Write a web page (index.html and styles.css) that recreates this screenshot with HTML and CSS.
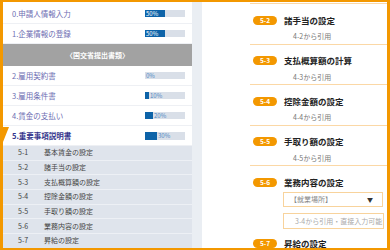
FILE: index.html
```html
<!DOCTYPE html>
<html lang="ja">
<head>
<meta charset="utf-8">
<link rel="stylesheet" href="styles.css">
</head>
<body>
<div class="frame">
  <aside class="nav">
    <div class="row"><span class="label">0.申請人情報入力</span><div class="bar"><div class="fill in" style="width:50%"><span class="pct">50%</span></div></div></div>
    <div class="row"><span class="label">1.企業情報の登録</span><div class="bar"><div class="fill in" style="width:50%"><span class="pct">50%</span></div></div></div>
    <div class="group">〈国交省提出書類〉</div>
    <div class="row"><span class="label">2.雇用契約書</span><div class="bar"><div class="fill" style="width:0%"></div><span class="pct">0%</span></div></div>
    <div class="row"><span class="label">3.雇用条件書</span><div class="bar"><div class="fill" style="width:10%"></div><span class="pct">10%</span></div></div>
    <div class="row"><span class="label">4.賃金の支払い</span><div class="bar"><div class="fill" style="width:20%"></div><span class="pct">20%</span></div></div>
    <div class="row active"><span class="label">5.重要事項説明書</span><div class="bar tall"><div class="fill" style="width:30%"></div><span class="pct">30%</span></div></div>
    <div class="sub"><span class="num">5-1</span><span>基本賃金の設定</span></div>
    <div class="sub"><span class="num">5-2</span><span>諸手当の設定</span></div>
    <div class="sub"><span class="num">5-3</span><span>支払概算額の設定</span></div>
    <div class="sub"><span class="num">5-4</span><span>控除金額の設定</span></div>
    <div class="sub"><span class="num">5-5</span><span>手取り額の設定</span></div>
    <div class="sub"><span class="num">5-6</span><span>業務内容の設定</span></div>
    <div class="sub"><span class="num">5-7</span><span>昇給の設定</span></div>
  </aside>
  <div class="gutter"></div>
  <main class="detail">
    <div class="topline"></div>
    <section class="item">
      <div class="head"><span class="badge">5-2</span><span class="title">諸手当の設定</span></div>
      <div class="note">4-2から引用</div>
    </section>
    <section class="item">
      <div class="head"><span class="badge">5-3</span><span class="title">支払概算額の計算</span></div>
      <div class="note">4-3から引用</div>
    </section>
    <section class="item">
      <div class="head"><span class="badge">5-4</span><span class="title">控除金額の設定</span></div>
      <div class="note">4-4から引用</div>
    </section>
    <section class="item">
      <div class="head"><span class="badge">5-5</span><span class="title">手取り額の設定</span></div>
      <div class="note">4-5から引用</div>
    </section>
    <section class="item open">
      <div class="head"><span class="badge">5-6</span><span class="title">業務内容の設定</span></div>
      <div class="select"><span>【就業場所】</span><span class="arrow">▼</span></div>
      <div class="input">3-4から引用・直接入力可能</div>
    </section>
    <section class="item last">
      <div class="head"><span class="badge">5-7</span><span class="title">昇給の設定</span></div>
    </section>
  </main>
</div>
</body>
</html>
```
FILE: styles.css
```css
html, body {
  margin: 0;
  padding: 0;
  background: #fff;
}

body {
  font-family: "Noto Sans CJK JP", "Noto Sans", sans-serif;
}

.frame {
  width: 390px;
  height: 250px;
  box-sizing: border-box;
  border: solid #f39800;
  border-width: 2px 3px;
  display: flex;
  overflow: hidden;
  background: #fff;
}

/* left navigation */
.nav {
  width: 189px;
  flex: none;
  padding-top: 2px;
  display: flex;
  flex-direction: column;
  background: #fff;
}

.row {
  height: 20px;
  flex: none;
  box-sizing: border-box;
  border-bottom: 1px solid #eef0f4;
  display: flex;
  align-items: center;
  padding: 0 7px 0 9px;
  font-size: 7.5px;
  line-height: 1;
  color: #6d6db2;
  position: relative;
}

.row .label {
  flex: 1;
  white-space: nowrap;
}

.row.active {
  font-weight: bold;
  color: #34348c;
}

.row.active::before {
  content: "";
  position: absolute;
  left: 0;
  top: 1px;
  width: 0;
  height: 0;
  border-top: 15px solid #f39800;
  border-right: 6px solid transparent;
}

.bar {
  width: 40px;
  height: 7px;
  flex: none;
  background: #d9dfe8;
  display: flex;
  align-items: center;
  font-size: 6px;
  line-height: 7px;
  font-weight: normal;
  color: #4d88c4;
}

.bar.tall {
  height: 8px;
}

.fill {
  height: 100%;
  flex: none;
  background: #0d63a8;
  display: flex;
  align-items: center;
}

.pct {
  padding-left: 1px;
  white-space: nowrap;
}

.fill.in .pct {
  color: #fff;
}

.group {
  height: 22px;
  flex: none;
  background: #a2a2a2;
  color: #fff;
  font-size: 7px;
  font-weight: bold;
  display: flex;
  align-items: center;
  justify-content: center;
  line-height: 1;
}

.sub {
  height: 14.7px;
  flex: none;
  box-sizing: border-box;
  border-bottom: 1px solid #edf0f5;
  background: #dfe4ec;
  display: flex;
  align-items: center;
  padding-left: 15px;
  font-size: 7px;
  line-height: 1;
  color: #444;
}

.sub .num {
  width: 26px;
  flex: none;
}

.gutter {
  width: 10px;
  flex: none;
  background: #eaeef3;
}

/* right detail */
.detail {
  flex: 1;
  background: #fff;
  overflow: hidden;
}

.topline {
  height: 1px;
  margin: 1px 0 0 48px;
  background: #fbd8a6;
}

.item {
  height: 40.5px;
  box-sizing: border-box;
  margin-left: 48px;
  padding-top: 11px;
  border-bottom: 1px solid #fbd8a6;
}

.item.open {
  height: auto;
  border-bottom: none;
}

.item.last {
  height: auto;
  padding-top: 9px;
  border-bottom: none;
}

.head {
  height: 10px;
  display: flex;
  align-items: center;
}

.badge {
  width: 24px;
  height: 9px;
  flex: none;
  margin-left: 3px;
  border-radius: 4.5px;
  background: #f39800;
  color: #fff;
  font-size: 6.5px;
  font-weight: bold;
  line-height: 1;
  display: flex;
  align-items: center;
  justify-content: center;
}

.title {
  margin-left: 7px;
  font-size: 8.5px;
  font-weight: bold;
  line-height: 1;
  color: #222;
  white-space: nowrap;
}

.note {
  margin-top: 6px;
  height: 10px;
  line-height: 10px;
  padding-left: 43px;
  font-size: 7px;
  color: #777;
}

.select {
  margin: 5px 0 0 33px;
  width: 100px;
  height: 15px;
  box-sizing: border-box;
  border: 1px solid #f8d39c;
  display: flex;
  align-items: center;
  justify-content: space-between;
  padding: 0 9px 0 6px;
  font-size: 7px;
  line-height: 1;
  color: #888;
}

.select .arrow {
  font-size: 6px;
  color: #333;
}

.input {
  margin: 6px 0 0 33px;
  width: 101px;
  height: 16px;
  box-sizing: border-box;
  border: 1px solid #f8d39c;
  display: flex;
  align-items: center;
  padding-left: 11px;
  font-size: 7px;
  line-height: 1;
  color: #aaa;
  white-space: nowrap;
  overflow: hidden;
}
```
